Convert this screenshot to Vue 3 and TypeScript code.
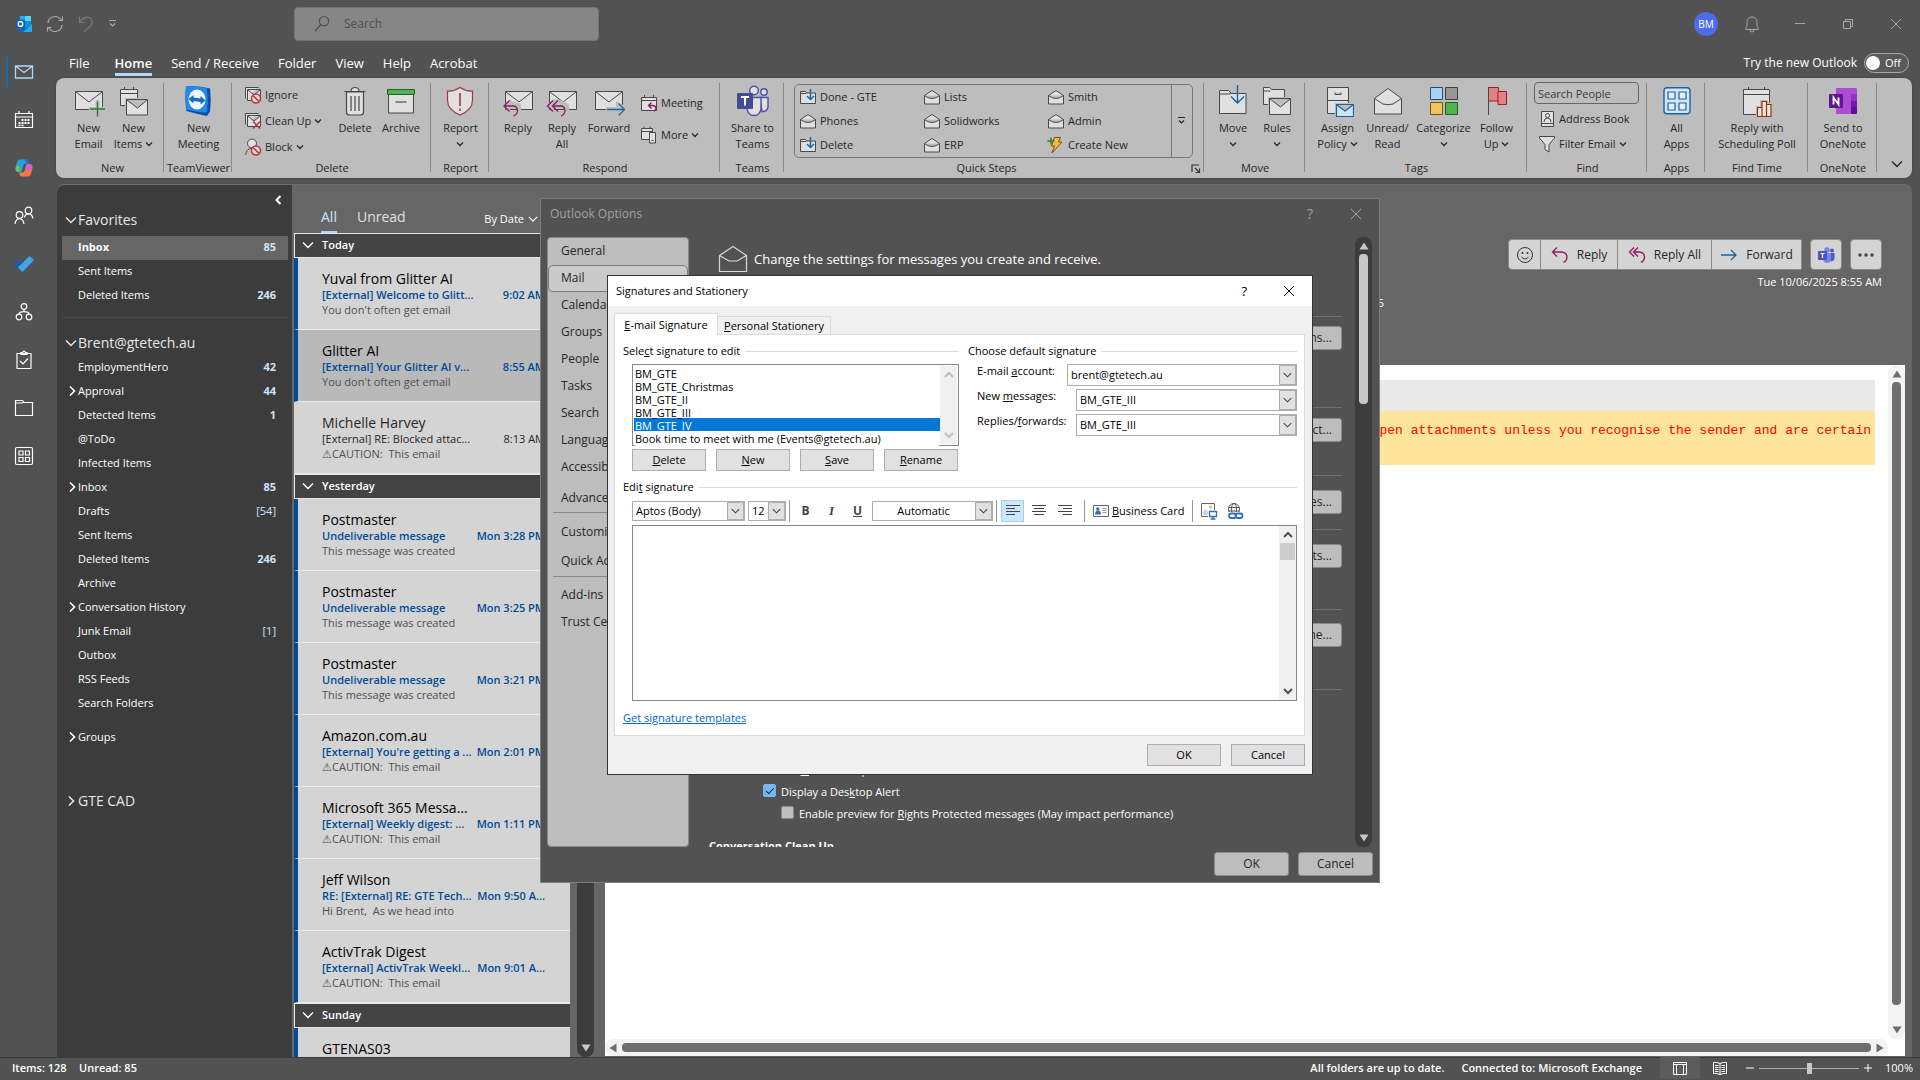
<script setup lang="ts">
import { ref } from 'vue'

interface Folder { name: string; count?: string; plain?: boolean; expandable?: boolean; active?: boolean }
interface Mail { from: string; subject: string; time: string; preview: string; read?: boolean; selected?: boolean }
interface MailGroup { day: string; mails: Mail[] }

const railIcons = ['mail', 'calendar', 'copilot', 'people', 'todo', 'org', 'tasks', 'folder', 'apps']
const railLabels = ['Mail', 'Calendar', 'Copilot', 'People', 'To Do', 'Org Explorer', 'Tasks', 'Files', 'More apps']
const menuTabs = ['File', 'Home', 'Send / Receive', 'Folder', 'View', 'Help', 'Acrobat']

const favorites: Folder[] = [
  { name: 'Inbox', count: '85', active: true },
  { name: 'Sent Items' },
  { name: 'Deleted Items', count: '246' },
]
const folders: Folder[] = [
  { name: 'EmploymentHero', count: '42' },
  { name: 'Approval', count: '44', expandable: true },
  { name: 'Detected Items', count: '1' },
  { name: '@ToDo' },
  { name: 'Infected Items' },
  { name: 'Inbox', count: '85', expandable: true },
  { name: 'Drafts', count: '[54]', plain: true },
  { name: 'Sent Items' },
  { name: 'Deleted Items', count: '246' },
  { name: 'Archive' },
  { name: 'Conversation History', expandable: true },
  { name: 'Junk Email', count: '[1]', plain: true },
  { name: 'Outbox' },
  { name: 'RSS Feeds' },
  { name: 'Search Folders' },
]

const caution = '⚠CAUTION:  This email'
const mailGroups: MailGroup[] = [
  {
    day: 'Today',
    mails: [
      { from: 'Yuval from Glitter AI', subject: '[External] Welcome to Glitt...', time: '9:02 AM', preview: "You don't often get email" },
      { from: 'Glitter AI', subject: '[External] Your Glitter AI v...', time: '8:55 AM', preview: "You don't often get email", selected: true },
      { from: 'Michelle Harvey', subject: '[External] RE: Blocked attac...', time: '8:13 AM', preview: caution, read: true },
    ],
  },
  {
    day: 'Yesterday',
    mails: [
      { from: 'Postmaster', subject: 'Undeliverable message', time: 'Mon 3:28 PM', preview: 'This message was created' },
      { from: 'Postmaster', subject: 'Undeliverable message', time: 'Mon 3:25 PM', preview: 'This message was created' },
      { from: 'Postmaster', subject: 'Undeliverable message', time: 'Mon 3:21 PM', preview: 'This message was created' },
      { from: 'Amazon.com.au', subject: "[External] You're getting a ...", time: 'Mon 2:01 PM', preview: caution },
      { from: 'Microsoft 365 Messa...', subject: '[External] Weekly digest: ...', time: 'Mon 1:11 PM', preview: caution },
      { from: 'Jeff Wilson', subject: 'RE: [External] RE: GTE Tech...', time: 'Mon 9:50 A...', preview: 'Hi Brent,  As we head into' },
      { from: 'ActivTrak Digest', subject: '[External] ActivTrak Weekl...', time: 'Mon 9:01 A...', preview: caution },
    ],
  },
  {
    day: 'Sunday',
    mails: [{ from: 'GTENAS03', subject: '', time: '', preview: '' }],
  },
]

const quickSteps = [
  { name: 'Done - GTE', icon: 'qs-move' },
  { name: 'Lists', icon: 'qs-open' },
  { name: 'Smith', icon: 'qs-open' },
  { name: 'Phones', icon: 'qs-open' },
  { name: 'Solidworks', icon: 'qs-open' },
  { name: 'Admin', icon: 'qs-open' },
  { name: 'Delete', icon: 'qs-move' },
  { name: 'ERP', icon: 'qs-open' },
  { name: 'Create New', icon: 'qs-bolt' },
]

const optionPages = [
  ['General', 'Mail', 'Calendar', 'Groups', 'People', 'Tasks', 'Search', 'Language', 'Accessibility', 'Advanced'],
  ['Customize Ribbon', 'Quick Access Toolbar'],
  ['Add-ins', 'Trust Center'],
]

const signatures = ['BM_GTE', 'BM_GTE_Christmas', 'BM_GTE_II', 'BM_GTE_III', 'BM_GTE_IV', 'Book time to meet with me (Events@gtetech.au)']
const selectedSignature = ref('BM_GTE_IV')
const newMessages = ref('BM_GTE_III')
const replies = ref('BM_GTE_III')
const desktopAlert = ref(true)
const envelopeIcon = ref(true)
const previewProtected = ref(false)
const zoomLevel = ref(50)
const peopleQuery = ref('')
const query = ref('')
const signatureBody = ref('')
</script>

<template>
  <svg class="sprite" aria-hidden="true">
    <symbol id="chev" viewBox="0 0 8 8"><path d="M1 2.5l3 3 3-3" fill="none" stroke="currentColor" stroke-width="1.3" /></symbol>
    <symbol id="down" viewBox="0 0 12 12"><path d="M1 3.5L6 8.5l5-5" fill="none" stroke="currentColor" stroke-width="1.4" /></symbol>
    <symbol id="right" viewBox="0 0 12 12"><path d="M4 1.5L8.5 6 4 10.5" fill="none" stroke="currentColor" stroke-width="1.6" /></symbol>
    <symbol id="left" viewBox="0 0 12 12"><path d="M7.5 2L3.5 6l4 4" fill="none" stroke="currentColor" stroke-width="2" /></symbol>
    <symbol id="close" viewBox="0 0 12 12"><path d="M1 1l10 10M11 1L1 11" fill="none" stroke="currentColor" /></symbol>
    <symbol id="tri-up" viewBox="0 0 10 8"><path d="M5 .5L9.5 7.5H.5z" fill="currentColor" /></symbol>
    <symbol id="tri-down" viewBox="0 0 10 8"><path d="M5 7.5L9.5 .5H.5z" fill="currentColor" /></symbol>
    <symbol id="drop" viewBox="0 0 10 10"><path d="M1 1.5h7M2 4.5l2.5 2.5L7 4.5" fill="none" stroke="currentColor" stroke-width="1.2" /></symbol>

    <symbol id="outlook" viewBox="0 0 18 18">
      <rect x="5" y="1" width="11" height="13" fill="#1490df" /><rect x="10" y="1" width="6" height="5" fill="#50d9ff" /><rect x="5" y="1" width="5" height="5" fill="#28a8ea" />
      <path d="M3 9l8 4 6-4v7.5H4z" fill="#0f6cbd" /><path d="M17 9v8H8z" fill="#28a8ea" />
      <rect x="1" y="4.5" width="9" height="9" rx="1" fill="#0a5ec2" /><ellipse cx="5.5" cy="9" rx="2.2" ry="2.5" fill="none" stroke="#fff" stroke-width="1.4" />
    </symbol>
    <symbol id="sync" viewBox="0 0 18 18"><g fill="none" stroke="currentColor" stroke-width="1.2"><path d="M2 8a7 7 0 0 1 13-3M16.5 1.5V5.5H12.5M16 10a7 7 0 0 1-13 3M1.5 16.5V12.5H5.5" /></g></symbol>
    <symbol id="undo" viewBox="0 0 18 18"><path d="M2.5 1.5v6h6M2.5 7.5C6 2 12 .5 14.5 4.5s-1 7-7.5 12.5" fill="none" stroke="currentColor" stroke-width="1.2" /></symbol>
    <symbol id="glass" viewBox="0 0 18 18"><path d="M2 16l5.5-6M11 1.5a4.7 4.7 0 1 0 .01 0z" fill="none" stroke="currentColor" stroke-width="1.2" /></symbol>
    <symbol id="bell" viewBox="0 0 18 18"><path d="M2.5 14.5v-1l1.5-2V7a5 5 0 0 1 10 0v4.5l1.5 2v1zM7 15a2 2 0 0 0 4 0" fill="none" stroke="currentColor" /></symbol>
    <symbol id="restore" viewBox="0 0 12 12"><path d="M1.5 3.5h7v7h-7zM3.5 3.5v-2h7v7h-2" fill="none" stroke="currentColor" /></symbol>

    <symbol id="r-mail" viewBox="0 0 20 20"><path d="M1.5 4h17v12h-17zM2 4.5l8 6 8-6" fill="none" stroke="#b4d6fa" stroke-width="1.3" /></symbol>
    <symbol id="r-calendar" viewBox="0 0 20 20"><path d="M1.5 3.5h17v14h-17zM1.5 7h17M5 1v2.5M15 1v2.5" fill="none" stroke="#fff" stroke-width="1.2" /><g fill="#fff"><path d="M7.5 9h2v2h-2zM10.5 9h2v2h-2zM13.5 9h2v2h-2zM4.5 12h2v2h-2zM7.5 12h2v2h-2zM10.5 12h2v2h-2zM13.5 12h2v2h-2zM4.5 14.8h2v1.5h-2zM7.5 14.8h2v1.5h-2z" /></g></symbol>
    <symbol id="r-copilot" viewBox="0 0 20 20">
      <path d="M6 1.5h6c2 0 2.5 1.5 3 4h-3c-2 0-2.5 1-3.2 4L7.5 14H4c-2.5 0-2.7-3-2-6S3.5 1.5 6 1.5z" fill="#22a5d8" /><path d="M2 8h4l-1 6c-3 0-4-2-3-6z" fill="#7cc242" />
      <path d="M14 18.5H8c-2 0-2.5-1.5-3-4h3c2 0 2.5-1 3.2-4L12.5 6H16c2.5 0 2.7 3 2 6s-1.5 6.5-4 6.5z" fill="#f2784b" /><path d="M12.5 6H16c2.5 0 2.7 3 2 6h-5.5z" fill="#d05fd0" /><path d="M12 1.5c2 0 2.5 1.5 3 4l-2.5.5-2-4.5z" fill="#2f62d9" />
    </symbol>
    <symbol id="r-people" viewBox="0 0 20 20"><g fill="none" stroke="#fff" stroke-width="1.2"><circle cx="14.5" cy="4.5" r="3.3" /><path d="M10.5 11.5c1-5 7.5-5 8.5 1" /><circle cx="5.5" cy="9" r="3.3" /><path d="M1 18c1-7 8-7 9 0" /></g></symbol>
    <symbol id="r-todo" viewBox="0 0 20 20"><path d="M0 9.5l3.5-4 5 5-3.5 4z" fill="#185abd" /><path d="M4 13.5L15.5 2 20 6 8.5 18z" fill="#41a5ee" /></symbol>
    <symbol id="r-org" viewBox="0 0 20 20"><g fill="none" stroke="#fff" stroke-width="1.2"><circle cx="10" cy="4.5" r="2.8" /><circle cx="5" cy="15" r="2.8" /><circle cx="15" cy="15" r="2.8" /><path d="M10 7.3V9.5M5 12.2c0-3.5 10-3.5 10 0" /></g></symbol>
    <symbol id="r-tasks" viewBox="0 0 20 20"><path d="M3 3.5h14v15H3zM7 4.5v-2h1.5L10 1l1.5 1.5H13v2zM6 11l3 3 5-5.5" fill="none" stroke="#fff" stroke-width="1.2" /></symbol>
    <symbol id="r-folder" viewBox="0 0 20 20"><path d="M1.5 17.5v-15h7l1.5 2h8.5v13zM1.5 5h6l2-.5" fill="none" stroke="#fff" stroke-width="1.2" /></symbol>
    <symbol id="r-apps" viewBox="0 0 20 20"><g fill="none" stroke="#fff" stroke-width="1.2"><rect x="1.5" y="1.5" width="17" height="17" rx="1.5" /><path d="M5 5h4v4H5zM11.5 5h4v4h-4zM5 11.5h4v4H5zM11.5 11.5h4v4h-4z" /></g></symbol>

    <symbol id="new-mail" viewBox="0 0 32 32"><path d="M2.5 6.5h27v18h-27z" fill="#e0e0e0" stroke="#484848" /><path d="M3 7l13 10L29 7" fill="none" stroke="#484848" /><path d="M24.5 15v17M16 24h16" stroke="#bdbdbd" stroke-width="4" /><path d="M24.5 16.5v15M17 24h15" stroke="#2f7d32" stroke-width="1.4" /></symbol>
    <symbol id="new-items" viewBox="0 0 32 32"><g fill="#e0e0e0" stroke="#484848"><path d="M2.5 4.5h17v16h-17zM2.5 8.5h17M6.5 2v2.5M15.5 2v2.5" /><path d="M7 13h25v18H7z" fill="#bdbdbd" stroke="none" /><path d="M8.5 14.5h21v15.5h-21zM9 15l10.5 8L29 15" /></g></symbol>
    <symbol id="teamviewer" viewBox="0 0 32 32"><path d="M4 1.5q12-1 24 2 1.5 12 0 23l-3 4.5Q13 28.5 4.5 26 2.5 14 4 1.5z" fill="#0a4fae" /><path d="M4 1.5q11-1 21 2 1.5 12 0 24-11-.5-20.5-3Q2.5 13 4 1.5z" fill="#1f8ae8" /><ellipse cx="15" cy="14.5" rx="8.5" ry="10" fill="#eef5fc" /><path d="M6.5 14l5-4v2.5l7 1V11l5 4.5-5 4V17l-7-1v2.5z" fill="#1769c4" /></symbol>
    <symbol id="trash" viewBox="0 0 32 32"><g fill="#e0e0e0" stroke="#484848" stroke-width="1.2"><path d="M7.5 7h17v20q0 3-3 3h-11q-3 0-3-3zM12 6.5q0-4 4-4t4 4" /><path d="M5.5 6.5h21M12 11v15M16 11v15M20 11v15" /></g></symbol>
    <symbol id="archive" viewBox="0 0 32 32"><path d="M3.5 9.5h25v18.5h-25z" fill="#e0e0e0" stroke="#484848" /><path d="M2.5 4.5h27v5h-27z" fill="#54b054" stroke="#1f5f24" /><path d="M10.5 17h11" stroke="#484848" stroke-width="1.2" /></symbol>
    <symbol id="report" viewBox="0 0 32 32"><path d="M16 2.5q6 4 12.5 3.5v9q0 10-12.5 15-12.5-5-12.5-15V6Q10 6.5 16 2.5z" fill="#e0e0e0" stroke="#a4373a" stroke-width="1.2" /><path d="M16 8v13M16 23.5v2.5" stroke="#a4373a" stroke-width="1.6" /></symbol>
    <symbol id="reply" viewBox="0 0 32 32"><path d="M3.5 6.5h27v18h-27z" fill="#e0e0e0" stroke="#484848" /><path d="M4 7l13 10L30 7" fill="none" stroke="#484848" /><path d="M8 14l-7 7 7 7V24h7v8h4V19L10 16z" fill="#bdbdbd" /><path d="M7.5 15.5L2 21l5.5 5.5M2 21h9q4.5 0 4.5 5 0 3-4 5" fill="none" stroke="#8f1a64" stroke-width="1.3" /></symbol>
    <symbol id="reply-all" viewBox="0 0 32 32"><path d="M3.5 6.5h27v18h-27z" fill="#e0e0e0" stroke="#484848" /><path d="M4 7l13 10L30 7" fill="none" stroke="#484848" /><path d="M8 14l-7 7 7 7V24h11v8h4V19L14 15z" fill="#bdbdbd" /><path d="M7 15.5L1.5 21 7 26.5M12 15.5L6.5 21l5.5 5.5M6.5 21h8q4.5 0 4.5 5 0 3-4 5" fill="none" stroke="#8f1a64" stroke-width="1.3" /></symbol>
    <symbol id="forward" viewBox="0 0 32 32"><path d="M2.5 6.5h27v18h-27z" fill="#e0e0e0" stroke="#484848" /><path d="M3 7l13 10L29 7" fill="none" stroke="#484848" /><path d="M13 22h10v-6l9 5v9l-8 2-2-6h-9z" fill="#bdbdbd" /><path d="M14 24.5h17M25.5 18.5l6 6-6 6" fill="none" stroke="#1f66a5" stroke-width="1.3" /></symbol>
    <symbol id="teams" viewBox="0 0 32 32"><g fill="#e0e0e0" stroke="#4f50a8" stroke-width="1.4"><circle cx="17" cy="5.5" r="4.3" /><circle cx="27" cy="7" r="3.2" /><path d="M23 12.5h8v10q-1.5 4.5-6 4z" /><path d="M10 12.5h14v11q-1 7-7 7t-7-7z" /></g><rect x="0" y="8" width="16" height="16" rx="1" fill="#464a95" /><path d="M4 12h8M8 12v8.5" stroke="#fff" stroke-width="2" /></symbol>
    <symbol id="move" viewBox="0 0 32 32"><path d="M2.5 28.5V5.5h9l3 3h14.5v20zM2.5 9h9l3-.5" fill="#e0e0e0" stroke="#484848" /><path d="M20.5 0v18M14 11.5l6.5 6.5 6.5-6.5" fill="none" stroke="#1464a8" stroke-width="1.4" /></symbol>
    <symbol id="rules" viewBox="0 0 32 32"><g fill="#e0e0e0" stroke="#484848"><path d="M2.5 19.5v-17h6l2 2h13v15zM2.5 6h7" /><path d="M7 12h25v18H7z" fill="#bdbdbd" stroke="none" /><path d="M8.5 13.5h21v16h-21zM9 14l10.5 8L29 14" /></g></symbol>
    <symbol id="policy" viewBox="0 0 32 32"><path d="M5.5 2.5h21v26h-21zM5.5 15.5h21M13 7.5v2h6v-2" fill="#e0e0e0" stroke="#484848" /><path d="M13 18h19v14H13z" fill="#bdbdbd" /><path d="M14.5 19.5h17v12h-17zM15 20l8 6 8-6" fill="#cfe4f7" stroke="#1464a8" stroke-width="1.2" /></symbol>
    <symbol id="unread" viewBox="0 0 32 32"><path d="M2.5 13.5L16 3.5l13.5 10v15.5h-27z" fill="#e0e0e0" stroke="#484848" /><path d="M2.5 13.5Q10 18.5 11 19q5 1.5 10 0l8.5-5.5" fill="none" stroke="#484848" /></symbol>
    <symbol id="categorize" viewBox="0 0 32 32"><path d="M2.5 2.5h12v12h-12z" fill="#a9d3f5" stroke="#1f4e79" /><path d="M17.5 2.5h12v12h-12z" fill="#969696" stroke="#404040" /><path d="M2.5 17.5h12v12h-12z" fill="#f2c45f" stroke="#7a5200" /><path d="M17.5 17.5h12v12h-12z" fill="#54b054" stroke="#1f5f24" /></symbol>
    <symbol id="flag" viewBox="0 0 32 32"><path d="M7.5 2.5h10v4h8v13h-8.5v-3.5h-9.5z" fill="#e58184" stroke="#8f2326" /><path d="M17 6.5v10" stroke="#8f2326" /><path d="M7.5 2v28" stroke="#484848" /></symbol>
    <symbol id="all-apps" viewBox="0 0 32 32"><rect x="3" y="2.7" width="26" height="26" rx="3" fill="#d6e4f0" stroke="#1464a8" stroke-width="1.4" /><path d="M7 7h7v7H7zM18 7h7v7h-7zM7 18h7v7H7zM18 18h7v7h-7z" fill="#e4eef6" stroke="#1464a8" stroke-width="1.2" /></symbol>
    <symbol id="poll" viewBox="0 0 32 32"><path d="M2.5 4.5h26v25h-26zM2.5 9.5h26M7.5 2v2.5M23.5 2v2.5" fill="#e0e0e0" stroke="#484848" /><path d="M15 21h4v-6h8v3h5v14H15z" fill="#bdbdbd" /><path d="M16.5 22.5h4.5V31.5h-4.5zM21 16.5h4.5v15H21zM25.5 19.5h4.5v12h-4.5z" fill="#f1e4de" stroke="#8a3512" stroke-width="1.2" /></symbol>
    <symbol id="onenote" viewBox="0 0 32 32"><path d="M9 4q0-1 1-1h19q1 0 1 1v24q0 1-1 1H10q-1 0-1-1z" fill="#ae4bd5" /><path d="M24 9h6v7h-6z" fill="#9332bf" /><path d="M24 16h6v6h-6z" fill="#7719aa" /><path d="M24 22h6v6q0 1-1 1h-5z" fill="#5c1291" /><rect x="2" y="9" width="14" height="14" rx="1" fill="#5f1691" /><path d="M6.5 19.5v-7l5 7v-7" fill="none" stroke="#fff" stroke-width="1.8" /></symbol>

    <symbol id="ignore" viewBox="0 0 18 18"><path d="M1.5 12.5v-11h13M3.5 14.5v-11h13v11zM4 4l6 5 6-5" fill="#e0e0e0" stroke="#484848" /><circle cx="12" cy="12.5" r="4.5" fill="#e8d0d0" stroke="#b03a3d" stroke-width="1.5" /><path d="M9 9.5l6 6" stroke="#b03a3d" stroke-width="1.5" /></symbol>
    <symbol id="cleanup" viewBox="0 0 18 18"><path d="M1.5 12.5v-11h13M3.5 14.5v-11h13v11zM4 4l6 5 6-5" fill="#e0e0e0" stroke="#484848" /><path d="M9 9.5l7 7M16 9.5l-7 7" stroke="#b03a3d" stroke-width="1.5" /></symbol>
    <symbol id="block" viewBox="0 0 18 18"><circle cx="8" cy="5.5" r="4.5" fill="#e0e0e0" stroke="#484848" /><path d="M1.5 17q1-6 6-7" fill="none" stroke="#484848" /><circle cx="12" cy="12.5" r="4.5" fill="#e8d0d0" stroke="#b03a3d" stroke-width="1.5" /><path d="M9 9.5l6 6" stroke="#b03a3d" stroke-width="1.5" /></symbol>
    <symbol id="meeting" viewBox="0 0 18 18"><path d="M1.5 3.5h15v13h-15zM1.5 6.5h15M4.5 1v2.5M13.5 1v2.5" fill="#e0e0e0" stroke="#484848" /><path d="M11.5 8.5l-3 3 3 3M8.5 11.5h4.5q3 .5 3 3 0 1.5-2 2.5" fill="none" stroke="#8f1a64" stroke-width="1.4" /></symbol>
    <symbol id="more" viewBox="0 0 18 18"><path d="M1.5 2.5h11v11h-11zM1.5 5.5h11M4 .5v2M10 .5v2" fill="#e0e0e0" stroke="#484848" /><path d="M9.5 6.5h6v10.5h-6zM11.5 14.5h2" fill="#e0e0e0" stroke="#484848" /></symbol>
    <symbol id="qs-move" viewBox="0 0 18 18"><path d="M1.5 15.5v-12h5l1.5 1.5h8.5v10.5zM1.5 5.5h6" fill="#e0e0e0" stroke="#484848" /><path d="M11.5 1v10M8 8l3.5 3.5L15 8" fill="none" stroke="#1464a8" stroke-width="1.4" /></symbol>
    <symbol id="qs-open" viewBox="0 0 18 18"><path d="M1.5 7.5L9 2.5l7.5 5v8.5h-15zM1.5 7.5q7.5 6 15 0" fill="#e0e0e0" stroke="#484848" /></symbol>
    <symbol id="qs-bolt" viewBox="0 0 18 18"><path d="M7.5 1.5h6l-2 4.5h3.5l-10 11 2.5-7h-3z" fill="#f2b84b" stroke="#7a5200" /><path d="M4 1.5v7M.5 5h7" stroke="#2f7d32" stroke-width="1.4" /></symbol>
    <symbol id="book" viewBox="0 0 18 18"><path d="M3.5 1.5h12v15h-12zM3.5 13.5h12" fill="#e0e0e0" stroke="#484848" /><circle cx="9.5" cy="5.5" r="2" fill="none" stroke="#484848" /><path d="M6 12q0-4 3.5-4t3.5 4" fill="none" stroke="#484848" /></symbol>
    <symbol id="funnel" viewBox="0 0 18 18"><path d="M1.5 1.5h15v1.5L11 9.5V17l-4-2.5v-5L1.5 3z" fill="#e0e0e0" stroke="#484848" /></symbol>
    <symbol id="launcher" viewBox="0 0 10 10"><path d="M1 8V1h7M4 4l4.5 4.5M8.5 4.5v4h-4" fill="none" stroke="#333" stroke-width="1.2" /></symbol>

    <symbol id="smile" viewBox="0 0 18 18"><circle cx="9" cy="9" r="7.5" fill="none" stroke="#333" /><circle cx="6.5" cy="7" r="1" fill="#333" /><circle cx="11.5" cy="7" r="1" fill="#333" /><path d="M5.5 11q3.5 4 7 0" fill="none" stroke="#333" /></symbol>
    <symbol id="a-reply" viewBox="0 0 18 18"><path d="M6 1.5L1.5 6 6 10.5M1.5 6h9q5.5.5 5.5 5.5 0 3-3.5 5" fill="none" stroke="#8f1a64" stroke-width="1.3" /></symbol>
    <symbol id="a-reply-all" viewBox="0 0 18 18"><path d="M6 1.5L1.5 6 6 10.5M10 1.5L5.5 6l4.5 4.5M5.5 6h6q5 .5 5 5.5 0 3-3.5 5" fill="none" stroke="#8f1a64" stroke-width="1.3" /></symbol>
    <symbol id="a-forward" viewBox="0 0 18 18"><path d="M1 9h15M11 4l5 5-5 5" fill="none" stroke="#1464a8" stroke-width="1.3" /></symbol>
    <symbol id="a-teams" viewBox="0 0 18 18"><circle cx="10" cy="4" r="2.7" fill="#7b83eb" /><circle cx="15" cy="4.5" r="2" fill="#5059c9" /><path d="M12 7h5.5v5.5q-.5 3-4 3z" fill="#5059c9" /><path d="M6 7h8v6q-.5 4-4 4t-4-4z" fill="#7b83eb" /><rect x="1" y="5" width="9" height="9" rx="1" fill="#4b53bc" /><path d="M3.5 7.5h4M5.5 7.5V12" stroke="#fff" stroke-width="1.2" /></symbol>
    <symbol id="open-envelope" viewBox="0 0 30 28"><path d="M1.5 10.5L15 1.5l13.5 9V26.5h-27zM1.5 10.5l9.5 5.5h8l9.5-5.5" fill="none" stroke="#d9d9d9" stroke-width="1.2" /></symbol>
    <symbol id="card" viewBox="0 0 16 12"><path d="M.5.5h15v11H.5z" fill="#fff" stroke="#666" /><circle cx="4.8" cy="4" r="1.7" fill="#2f6fb3" /><path d="M2 9.5q0-4 3-4t3 4z" fill="#2f6fb3" /><path d="M9.5 3.5h4M9.5 5.5h4M9.5 7.5h4" stroke="#999" /></symbol>
    <symbol id="picture" viewBox="0 0 18 18"><path d="M1.5 1.5h13v13h-13z" fill="#fff" stroke="#666" /><circle cx="10.5" cy="5" r="1.5" fill="#f2b45f" /><path d="M3 13V10l2.5-3L8 10v3z" fill="#c5d5ea" /><path d="M8 8h10v10H8z" fill="#fff" /><path d="M9.5 9.5h7v5h-7zM13 14.5v2M10.5 17h5" fill="#fff" stroke="#2f6fb3" stroke-width="1.3" /></symbol>
    <symbol id="link" viewBox="0 0 18 18"><g fill="none" stroke="#555"><circle cx="8" cy="7" r="5.5" /><ellipse cx="8" cy="7" rx="2.5" ry="5.5" /><path d="M2.5 5.5h11M2.5 9h11" /></g><path d="M3 10h14v8H3z" fill="#fff" /><g fill="none" stroke="#2f6fb3" stroke-width="1.8"><rect x="3" y="11.5" width="7" height="4.5" rx="2.2" /><rect x="9.5" y="11.5" width="7" height="4.5" rx="2.2" /></g></symbol>
  </svg>

  <div class="app">
    <header class="titlebar">
      <div class="quick">
        <svg width="18" height="18"><use href="#outlook" /></svg>
        <button class="bare lit" aria-label="Send and receive all"><svg width="18" height="18"><use href="#sync" /></svg></button>
        <button class="bare dim" aria-label="Undo"><svg width="18" height="18"><use href="#undo" /></svg></button>
        <button class="bare lit" aria-label="Customize toolbar"><svg width="10" height="10"><use href="#drop" /></svg></button>
      </div>
      <label class="search"><svg width="18" height="18"><use href="#glass" /></svg><input v-model="query" type="text" placeholder="Search" aria-label="Search" /></label>
      <div class="window-tools">
        <button class="avatar" aria-label="Account">BM</button>
        <button class="bare tool" aria-label="Notifications"><svg width="18" height="18"><use href="#bell" /></svg></button>
        <button class="bare tool" aria-label="Minimize"><svg width="12" height="12"><path d="M1 5.5h10" stroke="currentColor" /></svg></button>
        <button class="bare tool" aria-label="Restore"><svg width="12" height="12"><use href="#restore" /></svg></button>
        <button class="bare tool" aria-label="Close"><svg width="12" height="12"><use href="#close" /></svg></button>
      </div>
    </header>

    <div class="shell">
      <nav class="rail" aria-label="Apps">
        <button v-for="(icon, i) in railIcons" :key="icon" class="bare rail-item" :class="{ on: i === 0 }" :aria-label="railLabels[i]">
          <svg width="20" height="20"><use :href="'#r-' + icon" /></svg>
        </button>
      </nav>

      <div class="workspace">
        <div class="menu">
          <button v-for="tab in menuTabs" :key="tab" class="bare menu-tab" :class="{ on: tab === 'Home' }">{{ tab }}</button>
          <div class="try"><span>Try the new Outlook</span><button class="toggle" role="switch" aria-checked="false"><i></i>Off</button></div>
        </div>

        <section class="ribbon" aria-label="Ribbon">
          <div class="group g-new">
            <div class="tools center">
              <button class="big w44"><svg><use href="#new-mail" /></svg><span>New<br />Email</span></button>
              <button class="big w46"><svg><use href="#new-items" /></svg><span>New<br />Items <svg class="cv"><use href="#chev" /></svg></span></button>
            </div>
            <p>New</p>
          </div>
          <div class="group g-tv">
            <div class="tools center"><button class="big"><svg><use href="#teamviewer" /></svg><span>New<br />Meeting</span></button></div>
            <p>TeamViewer</p>
          </div>
          <div class="group g-delete">
            <div class="tools">
              <div class="stack three w90">
                <button class="small"><svg><use href="#ignore" /></svg>Ignore</button>
                <button class="small"><svg><use href="#cleanup" /></svg>Clean Up <svg class="cv"><use href="#chev" /></svg></button>
                <button class="small"><svg><use href="#block" /></svg>Block <svg class="cv"><use href="#chev" /></svg></button>
              </div>
              <button class="big w42"><svg><use href="#trash" /></svg><span>Delete</span></button>
              <button class="big w50"><svg><use href="#archive" /></svg><span>Archive</span></button>
            </div>
            <p>Delete</p>
          </div>
          <div class="group g-report">
            <div class="tools center"><button class="big"><svg><use href="#report" /></svg><span>Report<br /><svg class="cv"><use href="#chev" /></svg></span></button></div>
            <p>Report</p>
          </div>
          <div class="group g-respond">
            <div class="tools">
              <button class="big w44"><svg><use href="#reply" /></svg><span>Reply</span></button>
              <button class="big w44"><svg><use href="#reply-all" /></svg><span>Reply<br />All</span></button>
              <button class="big w50"><svg><use href="#forward" /></svg><span>Forward</span></button>
              <div class="stack two">
                <button class="small"><svg><use href="#meeting" /></svg>Meeting</button>
                <button class="small"><svg><use href="#more" /></svg>More <svg class="cv"><use href="#chev" /></svg></button>
              </div>
            </div>
            <p>Respond</p>
          </div>
          <div class="group g-teams">
            <div class="tools center"><button class="big"><svg><use href="#teams" /></svg><span>Share to<br />Teams</span></button></div>
            <p>Teams</p>
          </div>
          <div class="group g-steps">
            <div class="steps">
              <div class="steps-grid">
                <button v-for="step in quickSteps" :key="step.name" class="small"><svg><use :href="'#' + step.icon" /></svg>{{ step.name }}</button>
              </div>
              <button class="bare steps-more" aria-label="More quick steps"><svg width="10" height="10"><use href="#drop" /></svg></button>
            </div>
            <p class="steps-label">Quick Steps</p>
            <button class="bare launcher" aria-label="Manage quick steps"><svg width="10" height="10"><use href="#launcher" /></svg></button>
          </div>
          <div class="group g-move">
            <div class="tools center">
              <button class="big w44"><svg><use href="#move" /></svg><span>Move<br /><svg class="cv"><use href="#chev" /></svg></span></button>
              <button class="big w44"><svg><use href="#rules" /></svg><span>Rules<br /><svg class="cv"><use href="#chev" /></svg></span></button>
            </div>
            <p>Move</p>
          </div>
          <div class="group g-tags">
            <div class="tools center">
              <button class="big w50"><svg><use href="#policy" /></svg><span>Assign<br />Policy <svg class="cv"><use href="#chev" /></svg></span></button>
              <button class="big w50"><svg><use href="#unread" /></svg><span>Unread/<br />Read</span></button>
              <button class="big w62"><svg><use href="#categorize" /></svg><span>Categorize<br /><svg class="cv"><use href="#chev" /></svg></span></button>
              <button class="big w44"><svg><use href="#flag" /></svg><span>Follow<br />Up <svg class="cv"><use href="#chev" /></svg></span></button>
            </div>
            <p>Tags</p>
          </div>
          <div class="group g-find">
            <div class="find">
              <input v-model="peopleQuery" type="text" placeholder="Search People" aria-label="Search People" />
              <button class="small"><svg><use href="#book" /></svg>Address Book</button>
              <button class="small"><svg><use href="#funnel" /></svg>Filter Email <svg class="cv"><use href="#chev" /></svg></button>
            </div>
            <p>Find</p>
          </div>
          <div class="group g-apps">
            <div class="tools center"><button class="big"><svg><use href="#all-apps" /></svg><span>All<br />Apps</span></button></div>
            <p>Apps</p>
          </div>
          <div class="group g-time">
            <div class="tools center"><button class="big"><svg><use href="#poll" /></svg><span>Reply with<br />Scheduling Poll</span></button></div>
            <p>Find Time</p>
          </div>
          <div class="group g-note">
            <div class="tools center"><button class="big"><svg><use href="#onenote" /></svg><span>Send to<br />OneNote</span></button></div>
            <p>OneNote</p>
          </div>
          <button class="bare collapse" aria-label="Collapse ribbon"><svg width="12" height="12"><use href="#down" /></svg></button>
        </section>

        <main class="main">
          <aside class="folders">
            <button class="bare fold" aria-label="Collapse folder pane"><svg width="12" height="12"><use href="#left" /></svg></button>
            <button class="bare account first"><svg width="12" height="12"><use href="#down" /></svg>Favorites</button>
            <ul>
              <li v-for="f in favorites" :key="f.name">
                <button class="bare folder" :class="{ active: f.active }"><span class="name">{{ f.name }}</span><span class="count">{{ f.count }}</span></button>
              </li>
            </ul>
            <hr />
            <button class="bare account"><svg width="12" height="12"><use href="#down" /></svg>Brent@gtetech.au</button>
            <ul>
              <li v-for="f in folders" :key="f.name">
                <button class="bare folder"><svg v-if="f.expandable" width="12" height="12"><use href="#right" /></svg><span class="name">{{ f.name }}</span><span class="count" :class="{ plain: f.plain }">{{ f.count }}</span></button>
              </li>
            </ul>
            <button class="bare folder groups"><svg width="12" height="12"><use href="#right" /></svg><span class="name">Groups</span></button>
            <button class="bare account cad"><svg width="12" height="12"><use href="#right" /></svg>GTE CAD</button>
          </aside>

          <section class="messages" aria-label="Messages">
            <div class="filters">
              <button class="bare filter on">All</button>
              <button class="bare filter">Unread</button>
              <button class="bare sort">By Date <svg width="10" height="10"><use href="#down" /></svg></button>
            </div>
            <div class="list">
              <template v-for="g in mailGroups" :key="g.day">
                <button class="bare day"><svg width="12" height="12"><use href="#down" /></svg>{{ g.day }}</button>
                <article v-for="(m, i) in g.mails" :key="i" class="mail" :class="{ read: m.read, selected: m.selected }">
                  <h3>{{ m.from }}</h3>
                  <div class="line"><span>{{ m.subject }}</span><time>{{ m.time }}</time></div>
                  <p>{{ m.preview }}</p>
                </article>
              </template>
            </div>
            <div class="list-scroll"><svg width="10" height="8"><use href="#tri-down" /></svg></div>
          </section>

          <section class="reading" aria-label="Reading pane">
            <div class="mail-head">
              <div class="actions">
                <div class="action-set">
                  <button class="react" aria-label="React"><svg width="18" height="18"><use href="#smile" /></svg></button>
                  <button class="a1"><svg width="18" height="18"><use href="#a-reply" /></svg>Reply</button>
                  <button class="a2"><svg width="18" height="18"><use href="#a-reply-all" /></svg>Reply All</button>
                  <button class="a3"><svg width="18" height="18"><use href="#a-forward" /></svg>Forward</button>
                </div>
                <button class="square" aria-label="Share to Teams"><svg width="18" height="18"><use href="#a-teams" /></svg></button>
                <button class="square" aria-label="More actions"><svg width="18" height="18"><g fill="#444"><circle cx="3" cy="9" r="1.7" /><circle cx="9" cy="9" r="1.7" /><circle cx="15" cy="9" r="1.7" /></g></svg></button>
              </div>
              <time>Tue 10/06/2025 8:55 AM</time>
              <span class="expires">2025</span>
            </div>
            <div class="mail-body">
              <div class="page">
                <div class="banner"></div>
                <div class="warning">open attachments unless you recognise the sender and are certain</div>
              </div>
              <div class="v-scroll"><svg width="10" height="8"><use href="#tri-up" /></svg><i></i><svg width="10" height="8"><use href="#tri-down" /></svg></div>
              <div class="h-scroll"><svg width="8" height="10"><path d="M7.5 .5v9L.5 5z" fill="currentColor" /></svg><i></i><svg width="8" height="10"><path d="M.5 .5v9l7-4.5z" fill="currentColor" /></svg></div>
            </div>
          </section>
        </main>
      </div>
    </div>

    <footer class="status">
      <span class="s1">Items: 128</span><span>Unread: 85</span>
      <span class="s3">All folders are up to date.</span><span class="s4">Connected to: Microsoft Exchange</span>
      <button class="bare view on" aria-label="Normal view"><svg width="14" height="14"><path d="M.5 1.5h13v12H.5zM.5 3.5h13M3.5 3.5v10M10.5 3.5v10" fill="none" stroke="#fff" /></svg></button>
      <button class="bare view" aria-label="Reading view"><svg width="14" height="14"><path d="M7 2.5q-3-1.5-6.5-1v11q3.5-.5 6.5 1 3-1.5 6.5-1v-11q-3.5-.5-6.5 1zM7 2.5v11M2 4.5h3.5M2 6.5h3.5M2 8.5h3.5M2 10.5h3.5M8.5 4.5H12M8.5 6.5H12M8.5 8.5H12M8.5 10.5H12" fill="none" stroke="#fff" /></svg></button>
      <button class="bare step" aria-label="Zoom out"><svg width="8" height="8"><path d="M0 4h8" stroke="#fff" /></svg></button>
      <input v-model="zoomLevel" class="zoom" type="range" min="0" max="100" aria-label="Zoom" />
      <button class="bare step" aria-label="Zoom in"><svg width="8" height="8"><path d="M0 4h8M4 0v8" stroke="#fff" /></svg></button>
      <span class="pct">100%</span>
    </footer>

    <div class="overlay">
      <section class="options" role="dialog" aria-label="Outlook Options">
        <header><span>Outlook Options</span><button class="bare" aria-label="Help">?</button><button class="bare" aria-label="Close"><svg width="12" height="12"><use href="#close" /></svg></button></header>
        <div class="opt-body">
          <nav class="pages">
            <div v-for="(set, s) in optionPages" :key="s" class="page-set">
              <button v-for="p in set" :key="p" class="bare opt-page" :class="{ on: p === 'Mail', tall: p === 'Advanced' || s === 1 }">{{ p }}</button>
            </div>
          </nav>
          <div class="opt-content">
            <h2><svg width="30" height="28"><use href="#open-envelope" /></svg>Change the settings for messages you create and receive.</h2>
            <div class="row r1"><button class="pill">Editor Options...</button></div>
            <div class="row r2"><button class="pill">Spelling and Autocorrect...</button></div>
            <div class="row r3"><button class="pill">Signatures...</button></div>
            <div class="row r4"><button class="pill">Stationery and Fonts...</button></div>
            <div class="row r5"><button class="pill">Reading Pane...</button></div>
            <div class="row r6">
              <label class="check"><input v-model="envelopeIcon" type="checkbox" /><span>Sho<u>w</u> an envelope icon in the taskbar</span></label>
              <label class="check"><input v-model="desktopAlert" type="checkbox" /><span>Display a Des<u>k</u>top Alert</span></label>
              <label class="check sub"><input v-model="previewProtected" type="checkbox" /><span>Enable preview for <u>R</u>ights Protected messages (May impact performance)</span></label>
            </div>
            <h3>Conversation Clean Up</h3>
          </div>
          <div class="opt-scroll"><svg width="10" height="8"><use href="#tri-up" /></svg><i></i><svg width="10" height="8"><use href="#tri-down" /></svg></div>
        </div>
        <footer><button class="pill wide">OK</button><button class="pill wide">Cancel</button></footer>
      </section>
    </div>

    <div class="overlay upper">
      <section class="sig" role="dialog" aria-label="Signatures and Stationery">
        <header><span>Signatures and Stationery</span><button class="bare" aria-label="Help">?</button><button class="bare" aria-label="Close"><svg width="12" height="12"><use href="#close" /></svg></button></header>
        <div class="sig-tabs" role="tablist">
          <button class="on" role="tab" aria-selected="true"><u>E</u>-mail Signature</button>
          <button role="tab" aria-selected="false"><u>P</u>ersonal Stationery</button>
        </div>
        <div class="panel">
          <div class="columns">
            <div class="choose">
              <label class="legend" for="sig-list"><span>Sele<u>c</u>t signature to edit</span></label>
              <div class="listbox">
                <select id="sig-list" v-model="selectedSignature" size="6">
                  <option v-for="s in signatures" :key="s">{{ s }}</option>
                </select>
                <div class="bar faint"><svg width="10" height="10"><path d="M1 7l4-4 4 4" fill="none" stroke="currentColor" stroke-width="2" /></svg><svg width="10" height="10"><path d="M1 3l4 4 4-4" fill="none" stroke="currentColor" stroke-width="2" /></svg></div>
              </div>
              <div class="sig-buttons">
                <button class="btn"><u>D</u>elete</button><button class="btn"><u>N</u>ew</button><button class="btn"><u>S</u>ave</button><button class="btn"><u>R</u>ename</button>
              </div>
            </div>
            <div class="defaults">
              <div class="legend"><span>Choose default signature</span></div>
              <div class="field">
                <label for="acct">E-mail <u>a</u>ccount:</label>
                <span class="combo w-acct"><select id="acct"><option>brent@gtetech.au</option></select><svg><use href="#down" /></svg></span>
              </div>
              <div class="field">
                <label for="newm">New <u>m</u>essages:</label>
                <span class="combo"><select id="newm" v-model="newMessages"><option v-for="s in signatures" :key="s">{{ s }}</option></select><svg><use href="#down" /></svg></span>
              </div>
              <div class="field">
                <label for="repl">Replies/<u>f</u>orwards:</label>
                <span class="combo"><select id="repl" v-model="replies"><option v-for="s in signatures" :key="s">{{ s }}</option></select><svg><use href="#down" /></svg></span>
              </div>
            </div>
          </div>
          <label class="legend edit" for="editor"><span>Edi<u>t</u> signature</span></label>
          <div class="toolbar">
            <span class="combo low w-font"><select aria-label="Font"><option>Aptos (Body)</option></select><svg><use href="#down" /></svg></span>
            <span class="combo low w-size"><select aria-label="Font size"><option>12</option></select><svg><use href="#down" /></svg></span>
            <i class="sep"></i>
            <button class="bare fmt b">B</button><button class="bare fmt it">I</button><button class="bare fmt un">U</button>
            <span class="combo low w-color"><select aria-label="Font color"><option>Automatic</option></select><svg><use href="#down" /></svg></span>
            <i class="sep"></i>
            <button class="bare al on" aria-label="Align left"><svg width="14" height="12"><path d="M0 .5h14M0 3.5h9M0 6.5h14M0 9.5h9" stroke="#444" /></svg></button>
            <button class="bare al" aria-label="Center"><svg width="14" height="12"><path d="M0 .5h14M2 3.5h10M0 6.5h14M2 9.5h10" stroke="#444" /></svg></button>
            <button class="bare al" aria-label="Align right"><svg width="14" height="12"><path d="M0 .5h14M5 3.5h9M0 6.5h14M5 9.5h9" stroke="#444" /></svg></button>
            <i class="sep spaced"></i>
            <button class="bare card"><svg width="16" height="12"><use href="#card" /></svg><span><u>B</u>usiness Card</span></button>
            <i class="sep"></i>
            <button class="bare ins" aria-label="Insert picture"><svg width="18" height="18"><use href="#picture" /></svg></button>
            <button class="bare ins" aria-label="Insert hyperlink"><svg width="18" height="18"><use href="#link" /></svg></button>
          </div>
          <div class="editor">
            <textarea id="editor" v-model="signatureBody"></textarea>
            <div class="bar"><svg width="10" height="10"><path d="M1 7l4-4 4 4" fill="none" stroke="currentColor" stroke-width="2" /></svg><i></i><svg width="10" height="10"><path d="M1 3l4 4 4-4" fill="none" stroke="currentColor" stroke-width="2" /></svg></div>
          </div>
          <a href="#templates">Get signature templates</a>
        </div>
        <footer><button class="btn">OK</button><button class="btn">Cancel</button></footer>
      </section>
    </div>
  </div>
</template>

<style>
body { background: #525252; }
</style>

<style scoped>
.sprite { position: absolute; width: 0; height: 0; }
.app { height: 100vh; display: flex; flex-direction: column; background: #525252; color: #fff; font: 11px/16px "Open Sans", "Noto Sans", sans-serif; overflow: hidden; }
.app *, .app *::before, .app *::after { box-sizing: border-box; }
svg { flex: none; display: block; }
button, input, select, textarea { font: inherit; color: inherit; margin: 0; padding: 0; }
.bare, .big, .small { background: none; border: 0; }
ul { list-style: none; margin: 0; padding: 0; }
p, h2, h3 { margin: 0; }

.titlebar { display: flex; align-items: center; height: 48px; flex: none; }
.quick { display: flex; align-items: center; gap: 13px; width: 294px; padding-left: 15px; }
.quick .bare { display: flex; }
.lit { color: #ababab; }
.dim { color: #777; }
.search { display: flex; align-items: center; gap: 13px; width: 305px; height: 34px; padding-left: 18px; background: #868686; border: 1px solid #747474; border-radius: 4px; color: #505050; }
.search input { flex: 1; min-width: 0; border: 0; background: none; outline: 0; font-size: 12px; }
.search input::placeholder, .find input::placeholder { color: inherit; opacity: 1; }
.window-tools { margin-left: auto; display: flex; align-items: center; }
.avatar { width: 24px; height: 24px; border: 0; border-radius: 50%; background: #4f6bed; margin-right: 10px; font-size: 10px; }
.tool { width: 48px; height: 48px; display: grid; place-items: center; color: #a6a6a6; }

.shell { flex: 1; min-height: 0; display: flex; }
.rail { width: 56px; flex: none; display: flex; flex-direction: column; }
.rail-item { height: 32px; margin: 8px 0 8px 6px; display: flex; align-items: center; padding: 0 0 0 8px; }
.rail-item.on { border-left: 2px solid #0f6cbd; padding-left: 6px; }
.workspace { flex: 1; min-width: 0; display: flex; flex-direction: column; padding-right: 8px; }
.menu { display: flex; align-items: center; height: 30px; flex: none; gap: 19px; padding-left: 13px; font-size: 12px; }
.menu-tab { height: 26px; padding-top: 3px; border-bottom: 3px solid transparent; font-size: 13px; }
.menu-tab:first-child { margin-right: 6px; }
.menu-tab.on { font-weight: 600; border-bottom-color: #b4d6fa; }
.try { margin-left: auto; display: flex; align-items: center; gap: 7px; padding-right: 3px; }
.toggle { display: flex; align-items: center; gap: 5px; width: 45px; height: 20px; padding-left: 1px; border: 1px solid #a8a8a8; border-radius: 10px; background: #5a5a5a; font-size: 11px; }
.toggle i { width: 14px; height: 14px; border-radius: 50%; background: #fff; }

.ribbon { display: flex; height: 100px; flex: none; background: #bdbdbd; border-radius: 8px; color: #262626; box-shadow: 0 0 2px #383838; }
.group { position: relative; margin: 5px 0 6px; border-right: 1px solid #8a8a8a; display: flex; flex-direction: column; flex: none; }
.group > p { text-align: center; margin-top: auto; padding-left: 2px; height: 9px; line-height: 9px; white-space: nowrap; }
.group > p.steps-label { padding-right: 16px; }
.tools { display: flex; align-items: flex-start; padding-top: 2px; }
.tools.center { justify-content: center; padding-left: 2px; }
.g-new .tools.center { padding-left: 4px; }
.g-tags .tools.center { padding-left: 0; }
.g-new > p { padding-left: 6px; }
.g-new { width: 108px; } .g-tv { width: 68px; } .g-delete { width: 199px; } .g-delete .tools { padding-left: 12px; }
.g-report { width: 58px; } .g-respond { width: 231px; } .g-respond .tools { padding-left: 7px; }
.g-teams { width: 64px; } .g-steps { width: 420px; } .g-move { width: 101px; } .g-tags { width: 222px; }
.g-find { width: 120px; } .g-apps { width: 58px; } .g-time { width: 103px; } .g-note { width: 69px; }
.big { display: flex; flex-direction: column; align-items: center; white-space: nowrap; line-height: 16px; }
.big > svg { width: 32px; height: 32px; margin-bottom: 3px; }
.big > span { display: block; text-align: center; }
.cv { width: 8px; height: 8px; display: inline-block; }
.w42 { width: 42px; } .w44 { width: 44px; } .w46 { width: 46px; } .w50 { width: 50px; } .w62 { width: 62px; } .w90 { width: 90px; }
.small { display: flex; align-items: center; gap: 3px; height: 20px; white-space: nowrap; text-align: left; }
.small > svg:first-child { width: 18px; height: 18px; }
.stack { display: flex; flex-direction: column; }
.stack.three { gap: 6px; }
.stack.two { gap: 12px; padding: 8px 0 0 6px; }
.steps { display: flex; margin: 1px 10px 0; height: 74px; border: 1px solid #777; border-radius: 5px; }
.steps-grid { flex: 1; display: grid; grid-template-columns: repeat(3, 124px); grid-auto-rows: 24px; padding: 0 0 0 4px; align-items: center; }
.steps-more { width: 24px; border-left: 1px solid #777; display: grid; place-items: center; }
.launcher { position: absolute; right: 2px; bottom: -2px; }
.find { padding: 0 7px; display: flex; flex-direction: column; gap: 5px; }
.find input { height: 22px; border: 1px solid #666; border-radius: 4px; background: none; padding-left: 3px; color: #3a3a3a; width: 100%; margin-top: -1px; }
.find .small { padding-left: 4px; }
.collapse { margin-left: auto; align-self: flex-end; padding: 0 9px 8px 0; }

.main { flex: 1; min-height: 0; display: flex; margin-top: 6px; margin-left: 1px; background: #666; border-top: 1px solid #6e6e6e; border-radius: 8px 8px 0 0; overflow: hidden; }
.folders { width: 236px; flex: none; background: #3c3c3c; display: flex; flex-direction: column; padding: 8px 4px 0 5px; border-right: 1px solid #666; }
.fold { align-self: flex-end; margin-right: 3px; height: 14px; display: flex; align-items: center; }
.account { display: flex; align-items: center; gap: 1px; height: 26px; padding-left: 3px; font-size: 14px; color: #e6e6e6; }
.account.first { margin-bottom: 3px; }
.folders ul + hr { width: 100%; margin: 9px 0 12px; border: 0; border-top: 1px solid #484848; }
.folder { position: relative; display: flex; align-items: center; justify-content: space-between; width: 100%; height: 24px; padding: 0 12px 2px 16px; }
.folder svg { position: absolute; left: 4px; }
.folder.active { background: #666; font-weight: 700; }
.count { color: #cfe4fa; font-weight: 700; }
.count.plain { font-weight: 400; }
.folder.groups { margin-top: 10px; font-weight: 500; }
.account.cad { margin-top: 38px; }

.messages { width: 306px; flex: none; position: relative; display: flex; flex-direction: column; padding-left: 1px; padding-right: 29px; }
.filters { display: flex; height: 48px; padding: 18px 0 0 27px; flex: none; }
.filter { font-size: 14px; height: 30px; margin-right: 20px; border-bottom: 2px solid transparent; display: flex; align-items: center; color: #e0e0e0; }
.filter.on { color: #cfe4fa; border-bottom-color: #b4d6fa; }
.sort { margin-left: auto; margin-right: 32px; display: flex; align-items: center; gap: 4px; padding-top: 2px; }
.filter + .sort { white-space: nowrap; }
.list { flex: 1; min-height: 0; overflow: hidden; color: #000; }
.day { display: flex; align-items: center; gap: 8px; width: 100%; height: 25px; padding: 0 0 1px 7px; background: #444; border: 1px solid #e6e6e6; border-right: 0; color: #fff; font-weight: 600; }
.mail { height: 72px; background: #d4d4d4; border-left: 4px solid #004b98; border-bottom: 1px solid #ebebeb; padding: 12px 25px 0 24px; }
.mail.read { border-left-color: #d4d4d4; }
.mail.selected { background: #b9b9b9; }
.mail h3 { font-size: 14px; font-weight: 400; line-height: 17px; }
.mail .line { display: flex; justify-content: space-between; line-height: 15px; color: #004b98; font-weight: 600; white-space: nowrap; }
.mail.read .line { color: #262626; font-weight: 400; }
.mail.read h3 { color: #262626; }
.mail p { line-height: 15px; color: #505050; white-space: pre; }
.list-scroll { position: absolute; right: 5px; top: 48px; bottom: 0; width: 17px; background: #3c3c3c; border-radius: 8px; color: #c8c8c8; display: flex; align-items: flex-end; justify-content: center; padding-bottom: 5px; }

.reading { flex: 1; min-width: 0; display: flex; flex-direction: column; margin-left: 6px; padding-right: 7px; }
.mail-head { height: 180px; flex: none; padding: 54px 23px 0 0; display: flex; flex-direction: column; align-items: flex-end; }
.actions { display: flex; gap: 8px; color: #262626; font-size: 12px; }
.action-set { display: flex; border-radius: 4px; overflow: hidden; }
.actions button { height: 31px; background: #d4d4d4; border: 1px solid #8a8a8a; border-left-width: 0; display: flex; align-items: center; justify-content: center; gap: 8px; }
.actions .react { width: 33px; border-left-width: 1px; border-radius: 4px 0 0 4px; }
.a1 { width: 77px; } .a2 { width: 94px; } .a3 { width: 90px; }
.actions .square { width: 32px; border-left-width: 1px; border-radius: 4px; }
.mail-head time { margin-top: 4px; }
.expires { align-self: flex-start; width: 779px; margin-top: 5px; text-align: right; }
.mail-body { flex: 1; min-height: 0; display: grid; grid-template: 1fr 17px / 1fr 17px; background: #fff; margin-bottom: 1px; }
.page { padding: 15px 13px 0 0; min-width: 0; }
.banner { height: 31px; background: #e9e9e9; }
.warning { height: 54px; padding: 12px 4px 0; background: #ffe599; color: #f00; font: 13px/16px "Liberation Mono", monospace; text-align: right; white-space: nowrap; }
.v-scroll { background: #f3f3f3; border-radius: 8px; color: #6e6e6e; display: flex; flex-direction: column; align-items: center; gap: 4px; padding: 5px 0; }
.v-scroll i { flex: 1; width: 9px; border-radius: 4px; background: #6e6e6e; margin-bottom: 17px; }
.h-scroll { background: #f3f3f3; border-radius: 8px; color: #6e6e6e; display: flex; align-items: center; gap: 5px; padding: 0 4px; }
.h-scroll i { flex: 1; height: 9px; border-radius: 4px; background: #6e6e6e; }

.status { height: 23px; flex: none; display: flex; align-items: center; border-top: 1px solid #3c3c3c; padding: 0 7px 2px 12px; font-weight: 600; }
.s1 { width: 67px; } .s3 { margin-left: auto; margin-right: 17px; } .s4 { margin-right: 18px; }
.view { width: 40px; height: 22px; display: grid; place-items: center; }
.view.on { background: #5c5c5c; }
.step { margin: 0 5px; }
.view + .step { margin-left: 6px; }
.zoom { appearance: none; width: 100px; height: 16px; background: linear-gradient(#b0b0b0, #b0b0b0) center / 100% 1px no-repeat; }
.zoom::-webkit-slider-thumb { appearance: none; width: 5px; height: 11px; background: #c8c8c8; }
.pct { margin-left: 8px; font-weight: 500; }

.overlay { position: fixed; inset: 0; display: grid; place-items: center; }
.overlay.upper { padding-bottom: 30px; }
.options { width: 840px; height: 685px; background: #525252; border: 1px solid #7d7d7d; display: flex; flex-direction: column; padding: 0 6px; }
.options header { height: 38px; display: flex; align-items: center; color: #a0a0a0; font-size: 12px; padding: 0 11px 8px 3px; }
.options header span { margin-right: auto; }
.options header .bare { margin-left: 37px; font-size: 14px; }
.opt-body { display: flex; height: 610px; margin-right: 1px; overflow: hidden; }
.pages { width: 142px; flex: none; background: #bdbdbd; border: 1px solid #8a8a8a; border-radius: 4px; color: #262626; font-size: 12px; }
.page-set + .page-set { margin: 0 5px; border-top: 1px solid #8a8a8a; padding-top: 5px; }
.opt-page { display: block; width: 100%; height: 27px; padding-left: 12px; text-align: left; white-space: nowrap; border: 1px solid transparent; overflow: hidden; }
.page-set + .page-set .opt-page { padding-left: 7px; }
.opt-page.on { border-color: #7d7d7d; border-radius: 5px; background: #cacaca; }
.opt-page.tall { height: 31px; padding-top: 3px; }
.page-set + .page-set .opt-page.tall { height: 29px; padding-top: 0; }
.opt-content { flex: 1; min-width: 0; padding: 0 13px 0 20px; }
.opt-content h2 { display: flex; align-items: center; gap: 6px; height: 79px; padding: 0 0 34px 9px; font-size: 13px; font-weight: 400; }
.row { border-top: 1px solid #707070; display: flex; justify-content: flex-end; align-items: flex-start; }
.r1 { height: 91px; padding-top: 9px; } .r2 { height: 68px; padding-top: 10px; } .r3 { height: 54px; padding-top: 14px; }
.r4 { height: 80px; padding-top: 14px; } .r5 { height: 80px; padding-top: 13px; }
.r6 { flex-direction: column; justify-content: flex-start; height: 149px; padding: 69px 0 0 54px; }
.pill { height: 24px; padding: 0 9px; background: #bdbdbd; border: 1px solid #8a8a8a; border-radius: 3px; color: #262626; font-size: 12px; }
.pill.wide { width: 75px; }
.check { display: flex; align-items: center; gap: 5px; height: 22px; white-space: nowrap; }
.check.sub { padding-left: 18px; }
.check input { appearance: none; width: 13px; height: 13px; margin-bottom: 3px; background: #bdbdbd; border: 1px solid #8a8a8a; border-radius: 2px; display: grid; place-items: center; }
.check input:checked { background: #75b6f5; border-color: #75b6f5; }
.check input:checked::before { content: ""; width: 8px; height: 4px; border: solid #222; border-width: 0 0 1px 1px; transform: rotate(-45deg); }
.opt-content h3 { font-size: 11px; font-weight: 700; }
.opt-scroll { width: 17px; background: #3c3c3c; border-radius: 8px; color: #c8c8c8; display: flex; flex-direction: column; align-items: center; padding: 5px 0; gap: 4px; }
.opt-scroll i { width: 9px; height: 150px; border-radius: 4px; background: #c8c8c8; margin-bottom: auto; }
.options footer { display: flex; justify-content: flex-end; gap: 9px; padding-top: 5px; }

.sig { width: 706px; height: 500px; background: #f0f0f0; border: 1px solid #333; color: #000; display: flex; flex-direction: column; }
.sig header { height: 30px; background: #fff; display: flex; align-items: center; padding: 0 17px 0 8px; }
.sig header span { margin-right: auto; }
.sig header .bare { margin-left: 36px; font-size: 13px; }
.sig-tabs { display: flex; align-items: flex-end; padding: 7px 6px 0; height: 29px; }
.sig-tabs button { width: 113px; height: 19px; border: 1px solid #dcdcdc; border-bottom: 0; border-left: 0; background: #f0f0f0; }
.sig-tabs button.on { width: 104px; height: 23px; margin-bottom: -1px; border-left: 1px solid #dcdcdc; background: #fff; position: relative; }
.panel { margin: -1px 7px 0 6px; height: 402px; background: #fff; border: 1px solid #dcdcdc; padding: 8px 7px 0 8px; }
.columns { display: flex; gap: 9px; }
.choose { width: 336px; }
.defaults { flex: 1; }
.legend { display: flex; align-items: center; gap: 5px; height: 16px; }
.legend::after { content: ""; flex: 1; height: 1px; background: #dcdcdc; }
.listbox { margin: 5px 0 0 9px; height: 82px; border: 1px solid #828790; display: flex; padding: 1px; }
.listbox select { appearance: none; flex: 1; min-width: 0; height: 80px; border: 0; outline: 0; overflow: hidden; padding: 0; background: #fff; }
.listbox option { height: 13px; min-height: 13px; line-height: 9px; padding: 0 0 0 1px; color: #000; }
.listbox option:checked { background: #0078d7 linear-gradient(#0078d7, #0078d7); color: #fff; }
.bar { width: 17px; background: #f0f0f0; color: #505050; display: flex; flex-direction: column; align-items: center; justify-content: space-between; padding: 4px 0; }
.bar.faint { color: #bfbfbf; }
.sig-buttons { display: flex; gap: 10px; margin: 3px 0 0 9px; }
.btn { width: 74px; height: 22px; background: #e1e1e1; border: 1px solid #adadad; }
.field { display: flex; justify-content: space-between; padding-left: 9px; margin-top: 3px; }
.field:nth-child(2) { margin-top: 5px; }
.field label { line-height: 14px; white-space: nowrap; }
.combo { position: relative; display: block; width: 221px; height: 22px; }
.combo.w-acct { width: 230px; }
.combo select { appearance: none; display: block; width: 100%; height: 100%; padding: 0 18px 0 3px; border: 1px solid #adadad; border-radius: 0; background: #fff; }
.combo svg { position: absolute; right: 1px; top: 1px; width: 17px; height: 20px; padding: 0 3px; background: #e1e1e1; border: 1px solid #adadad; color: #444; pointer-events: none; }
.combo.low { height: 20px; flex: none; }
.combo.low svg { height: 18px; }
.combo.w-font { width: 113px; } .combo.w-size { width: 38px; } .combo.w-color { width: 121px; }
.combo.w-color select { text-align-last: center; padding: 0 18px 0 0; }
.legend.edit { margin-top: 8px; }
.toolbar { display: flex; align-items: center; gap: 3px; height: 22px; margin: 5px 0 0 9px; }
.sep { width: 1px; height: 22px; margin-right: 1px; background: #9a9a9a; flex: none; }
.sep.spaced { margin-left: 5px; }
.fmt { width: 23px; height: 20px; font-size: 12px; color: #444; }
.b, .un { font-weight: 700; }
.it { font: italic 700 13px/16px "Liberation Serif", serif; }
.un { text-decoration: underline; }
.al { width: 23px; height: 22px; display: grid; place-items: center; border: 1px solid transparent; flex: none; }
.al.on { background: #cce8ff; border-color: #99d1ff; }
.card { display: flex; align-items: center; gap: 3px; padding: 0 5px 0 4px; white-space: nowrap; }
.ins { width: 23px; display: grid; place-items: center; }
.editor { display: flex; margin: 3px 0 0 9px; height: 176px; border: 1px solid #828790; }
.editor textarea { flex: 1; border: 0; outline: 0; resize: none; background: #fff; }
.editor .bar { justify-content: flex-start; }
.editor .bar i { width: 15px; height: 17px; background: #cdcdcd; margin: 3px 0 auto; }
.panel a { display: inline-block; margin-top: 9px; color: #0066cc; text-decoration: underline; }
.sig footer { display: flex; justify-content: flex-end; gap: 10px; padding: 8px 7px 0; }
</style>
